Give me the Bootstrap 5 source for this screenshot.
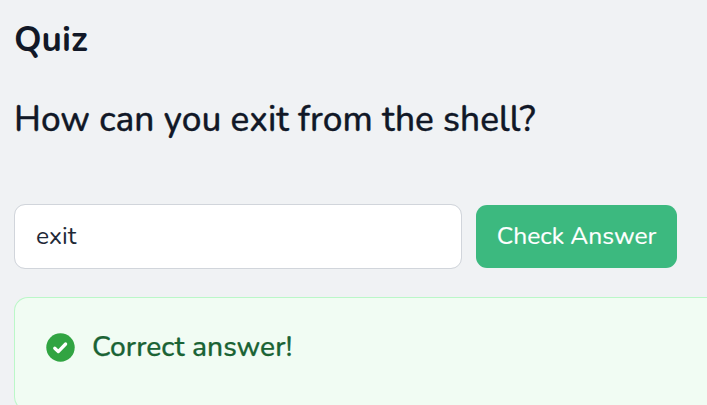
<!DOCTYPE html>
<html lang="en">
<head>
<meta charset="utf-8">
<meta name="viewport" content="width=device-width, initial-scale=1">
<title>Quiz</title>
<link href="https://cdn.jsdelivr.net/npm/bootstrap@5.3.0/dist/css/bootstrap.min.css" rel="stylesheet">
<style>
body{background:#f0f2f4;color:#111827;font-family:Nunito,Lato,"Open Sans",sans-serif;height:405px;overflow:hidden}
.quiz{padding:15px 0 0 14px;height:405px}
.quiz-title{font-size:35.2px;line-height:48px;font-weight:700}
.quiz-question{font-size:35.2px;line-height:48px;font-weight:500;letter-spacing:.03px;-webkit-text-stroke:.35px currentColor;margin-top:32px;white-space:nowrap}
.answer-row{margin-top:61px;gap:14px}
.answer-input{width:448px;height:65px;flex:none;border:1px solid #d1d5db;border-radius:11px;padding:0 21px 2px;font-size:24.64px;color:#1f2937}
.check-btn,.check-btn:hover{width:201px;height:63px;padding:0 0 1px;border:0;border-radius:11px;background:#3cb97f;color:#fff;font-size:24.64px;font-weight:400;-webkit-text-stroke:.2px currentColor;white-space:nowrap}
.result{margin-top:28px;height:114px;border:1px solid #bbf7c8;border-right:0;border-radius:14px 0 0 14px;background:#f1fcf3;color:#1a6334;padding:29px 31px;gap:17px}
.result svg{flex:none;margin-top:6px}
.result-text{font-size:28.16px;line-height:40px;font-weight:500;letter-spacing:.03px;-webkit-text-stroke:.25px currentColor;white-space:nowrap}
</style>
</head>
<body>
<main class="quiz overflow-hidden">
  <h1 class="quiz-title mb-0"><span>Quiz</span></h1>
  <h2 class="quiz-question mb-0"><span>How can you exit from the shell?</span></h2>
  <form class="answer-row d-flex align-items-center">
    <input class="answer-input form-control" type="text" value="exit" aria-label="Answer">
    <button class="check-btn btn" type="button"><span>Check Answer</span></button>
  </form>
  <div class="result d-flex align-items-start" role="status">
    <svg width="29" height="29" viewBox="0 0 29 29" aria-hidden="true"><circle cx="14.5" cy="14.5" r="14.2" fill="#31a442"/><path d="M8.8 15.2l3.5 3.4 7.3-7.6" fill="none" stroke="#fff" stroke-width="3.3" stroke-linecap="round" stroke-linejoin="round"/></svg>
    <span class="result-text">Correct answer!</span>
  </div>
</main>
<script src="https://cdn.jsdelivr.net/npm/bootstrap@5.3.0/dist/js/bootstrap.bundle.min.js"></script>
</body>
</html>
